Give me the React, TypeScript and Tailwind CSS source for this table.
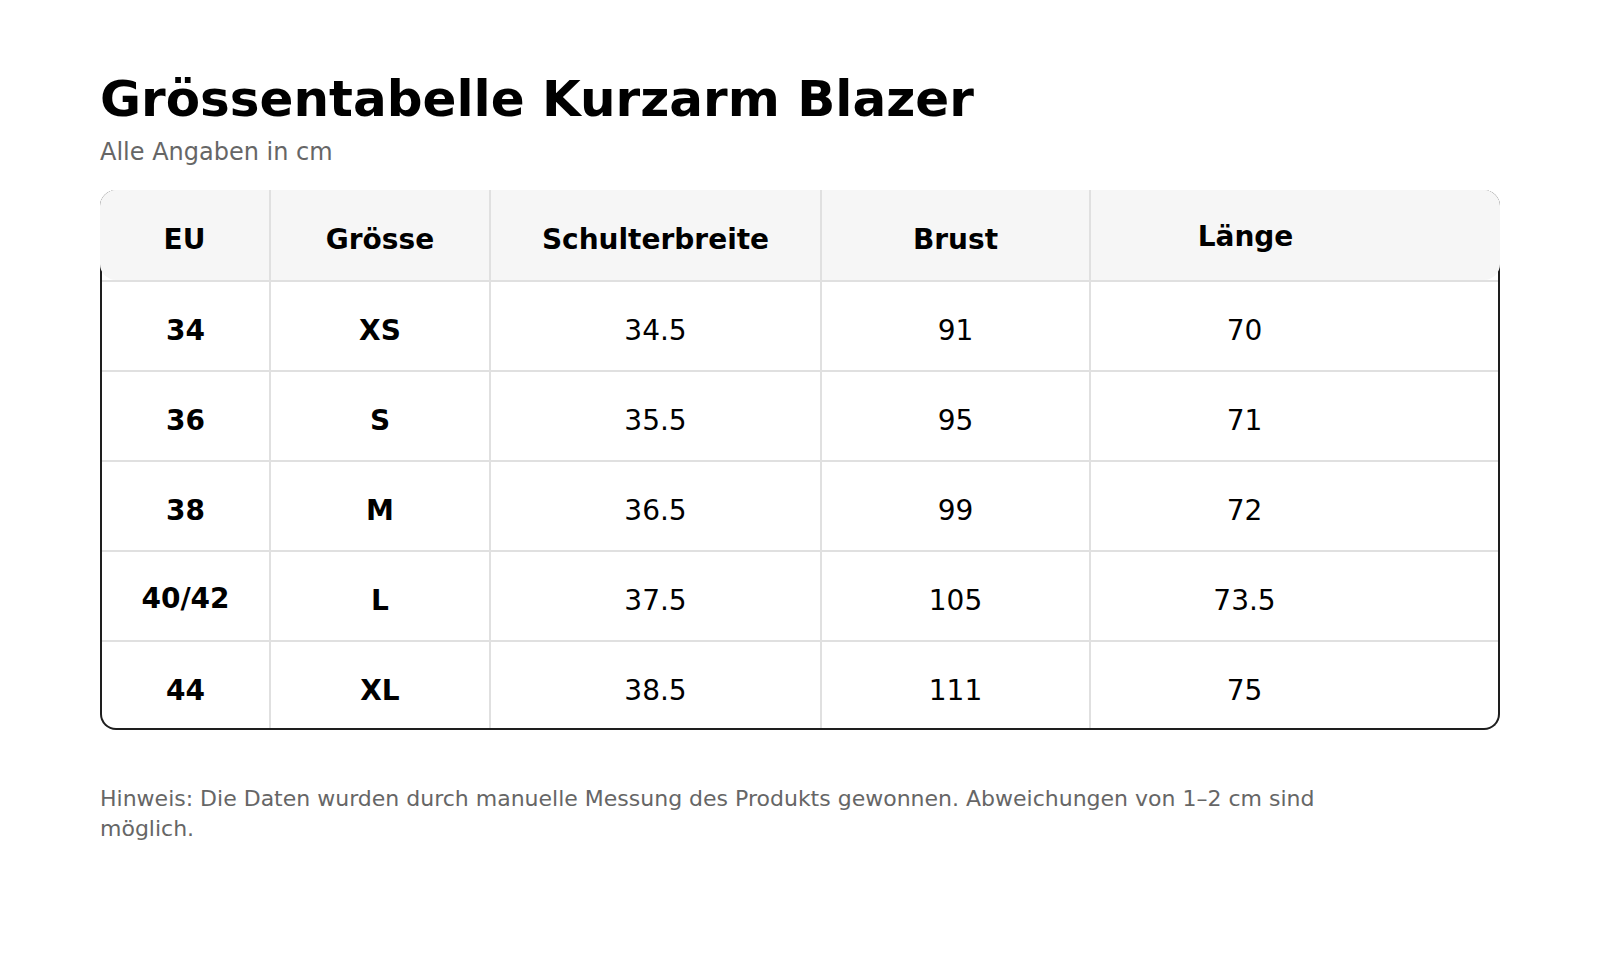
const rows = [
  { eu: "34", size: "XS", shoulder: "34.5", chest: "91", length: "70" },
  { eu: "36", size: "S", shoulder: "35.5", chest: "95", length: "71" },
  { eu: "38", size: "M", shoulder: "36.5", chest: "99", length: "72" },
  { eu: "40/42", size: "L", shoulder: "37.5", chest: "105", length: "73.5" },
  { eu: "44", size: "XL", shoulder: "38.5", chest: "111", length: "75" },
];

const cell = "flex items-center justify-center border-r-2 border-[#e0e0e0]";
const lastCell = "flex items-center justify-center pr-[100px]";

function HeaderRow() {
  return (
    <div className="relative -mx-[2px] grid h-[90px] grid-cols-[171px_220px_331px_269px_1fr] rounded-2xl bg-[#f6f6f6] font-bold">
      <div className={cell + " pt-[10px]"}>EU</div>
      <div className={cell + " pt-[10px]"}>Grösse</div>
      <div className={cell + " pt-[10px]"}>Schulterbreite</div>
      <div className={cell + " pt-[10px]"}>Brust</div>
      <div className={lastCell + " pt-[4px]"}>Länge</div>
    </div>
  );
}

function BodyRow({
  eu,
  size,
  shoulder,
  chest,
  length,
  last,
}: {
  eu: string;
  size: string;
  shoulder: string;
  chest: string;
  length: string;
  last: boolean;
}) {
  const pad = last ? " pt-[12px]" : " pt-[10px]";
  return (
    <div
      className={
        "grid grid-cols-[169px_220px_331px_269px_1fr] border-t-2 border-[#e0e0e0] " +
        (last ? "h-[88px]" : "h-[90px]")
      }
    >
      <div className={cell + " font-bold" + (eu === "40/42" ? " pt-[6px]" : pad)}>
        {eu}
      </div>
      <div className={cell + " font-bold" + pad}>{size}</div>
      <div className={cell + pad}>{shoulder}</div>
      <div className={cell + pad}>{chest}</div>
      <div className={lastCell + pad}>{length}</div>
    </div>
  );
}

export default function App() {
  return (
    <div className="min-h-[980px] bg-white px-[100px] pt-[69px] font-['DejaVu_Sans',sans-serif] text-black">
      <h1 className="text-[50px] font-bold leading-[1.2]">
        Grössentabelle Kurzarm Blazer
      </h1>
      <p className="mt-[5px] text-[24px] leading-[1.5] text-[#666]">
        Alle Angaben in cm
      </p>

      <div className="mt-[20px] rounded-2xl border-2 border-t-0 border-[#1e1e1e] text-[28px]">
        <HeaderRow />
        {rows.map((r, i) => (
          <BodyRow key={r.eu} {...r} last={i === rows.length - 1} />
        ))}
      </div>

      <p className="mt-[54px] max-w-[1260px] text-[22px] leading-[30px] text-[#666]">
        Hinweis: Die Daten wurden durch manuelle Messung des Produkts gewonnen.
        Abweichungen von 1–2 cm sind möglich.
      </p>
    </div>
  );
}
